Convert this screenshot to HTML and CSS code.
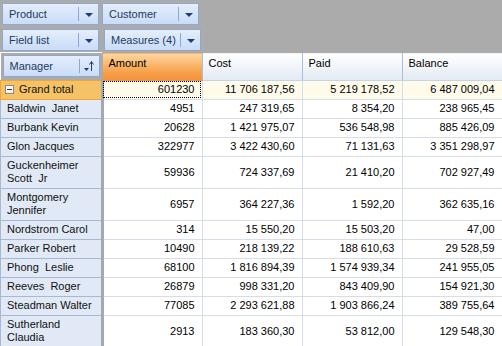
FILE: index.html
```
<!DOCTYPE html>
<html lang="en">
<head>
  <meta charset="UTF-8" />
  <title>Pivot grid</title>
  <link rel="stylesheet" href="styles.css">
</head>
<body>
  <div class="pivot">
    <!-- filter / column / data areas -->
    <div class="toolbar">
      <div class="bar-row">
        <div class="field-btn"><span class="label">Product</span><span class="drop"><i class="tri"></i></span></div>
        <div class="field-btn"><span class="label">Customer</span><span class="drop"><i class="tri"></i></span></div>
      </div>
      <div class="bar-row">
        <div class="field-btn"><span class="label">Field list</span><span class="drop"><i class="tri"></i></span></div>
        <div class="field-btn shifted"><span class="label">Measures (4)</span><span class="drop"><i class="tri"></i></span></div>
      </div>
    </div>

    <table class="grid">
      <thead>
        <tr>
          <th class="corner">
            <div class="field-btn"><span class="label">Manager</span><span class="drop">
              <svg width="12" height="14" viewBox="0 0 12 14">
                <path d="M1 9h5l-2.5 3z" fill="#1e3c78"/>
                <path d="M8.5 12V3" stroke="#1e3c78" stroke-width="1" fill="none"/>
                <path d="M6.5 5.5L8.5 2.5L10.5 5.5" stroke="#1e3c78" stroke-width="1" fill="none"/>
              </svg>
            </span></div>
          </th>
          <th class="col-head active">Amount</th>
          <th class="col-head">Cost</th>
          <th class="col-head">Paid</th>
          <th class="col-head">Balance</th>
        </tr>
      </thead>
      <tbody>
        <tr class="total">
          <th class="row-head"><span class="collapse"></span>Grand total</th>
          <td class="focus">601230</td>
          <td>11 706 187,56</td>
          <td>5 219 178,52</td>
          <td>6 487 009,04</td>
        </tr>
        <tr><th class="row-head">Baldwin&nbsp; Janet</th><td>4951</td><td>247 319,65</td><td>8 354,20</td><td>238 965,45</td></tr>
        <tr><th class="row-head">Burbank Kevin</th><td>20628</td><td>1 421 975,07</td><td>536 548,98</td><td>885 426,09</td></tr>
        <tr><th class="row-head">Glon Jacques</th><td>322977</td><td>3 422 430,60</td><td>71 131,63</td><td>3 351 298,97</td></tr>
        <tr class="tall"><th class="row-head">Guckenheimer<br>Scott&nbsp; Jr</th><td>59936</td><td>724 337,69</td><td>21 410,20</td><td>702 927,49</td></tr>
        <tr class="tall"><th class="row-head">Montgomery<br>Jennifer</th><td>6957</td><td>364 227,36</td><td>1 592,20</td><td>362 635,16</td></tr>
        <tr><th class="row-head">Nordstrom Carol</th><td>314</td><td>15 550,20</td><td>15 503,20</td><td>47,00</td></tr>
        <tr><th class="row-head">Parker Robert</th><td>10490</td><td>218 139,22</td><td>188 610,63</td><td>29 528,59</td></tr>
        <tr><th class="row-head">Phong&nbsp; Leslie</th><td>68100</td><td>1 816 894,39</td><td>1 574 939,34</td><td>241 955,05</td></tr>
        <tr><th class="row-head">Reeves&nbsp; Roger</th><td>26879</td><td>998 331,20</td><td>843 409,90</td><td>154 921,30</td></tr>
        <tr><th class="row-head">Steadman Walter</th><td>77085</td><td>2 293 621,88</td><td>1 903 866,24</td><td>389 755,64</td></tr>
        <tr class="tall"><th class="row-head">Sutherland<br>Claudia</th><td>2913</td><td>183 360,30</td><td>53 812,00</td><td>129 548,30</td></tr>
      </tbody>
    </table>
  </div>
</body>
</html>
```

FILE: styles.css
```
/* page */
body {
  margin: 0;
  padding: 0;
  background-color: #ffffff;
  font-family: 'Liberation Sans', Arial, sans-serif;
  font-size: 11px;
  color: #000;
}

.pivot {
  width: 502px;
  overflow: hidden;
}

/* gray area with field buttons */
.toolbar {
  background-color: #ababab;
  padding: 3px 0 1px 2px;
  display: flex;
  flex-direction: column;
  gap: 4px;
}

.bar-row {
  display: flex;
  gap: 3px;
}

.field-btn {
  box-sizing: border-box;
  width: 97px;
  height: 22px;
  display: flex;
  align-items: center;
  background: linear-gradient(#e4eefc, #c9dcf7);
  border: 1px solid #8ea8cf;
  border-radius: 1px;
  color: #1e3a5f;
  font-size: 11px;
  font-weight: normal;
  text-align: left;
}
.field-btn.shifted {
  margin-left: 2px;
}
.field-btn .label {
  flex: 1;
  padding-left: 6px;
  white-space: nowrap;
  overflow: hidden;
}
.field-btn .drop {
  flex: none;
  width: 19px;
  height: 14px;
  border-left: 1px solid #8ea8cf;
  display: flex;
  align-items: center;
  justify-content: center;
}
.tri {
  width: 0;
  height: 0;
  border-left: 4px solid transparent;
  border-right: 4px solid transparent;
  border-top: 4px solid #1e3c78;
  margin-top: 2px;
}

/* pivot table */
.grid {
  border-collapse: collapse;
  table-layout: fixed;
  width: 502px;
}
.grid th,
.grid td {
  padding: 0;
  font-weight: normal;
  line-height: 13px;
}
.grid tbody tr {
  height: 19px;
}
.grid tbody tr.tall {
  height: 32px;
}

.corner {
  width: 99px;
  height: 27px;
  background-color: #ababab;
  padding: 0 0 0 2px !important;
  border-right: 1px solid #ababab;
  vertical-align: middle;
}

.col-head {
  width: 100px;
  box-sizing: border-box;
  height: 27px;
  text-align: left;
  vertical-align: top;
  padding: 4px 6px 0 !important;
  background: linear-gradient(#ffffff, #e3eaf4);
  border-left: 1px solid #a9bfd9;
  border-bottom: 1px solid #c5d3e4;
  border-top: 1px solid #ababab;
}
.col-head.active {
  background: linear-gradient(#fed8a0, #f7a04a 70%, #f4913a);
  border-left: 1px solid #e7903a;
  border-bottom: 1px solid #f4913a;
}

/* row headers */
.row-head {
  text-align: left;
  padding: 0 3px 0 6px !important;
  background-color: #e0e9f5;
  border-top: 1px solid #a6b9d1;
  border-bottom: 1px solid #a6b9d1;
  border-right: 3px solid #a3a9b0;
  border-left: 1px solid #a6b9d1;
  color: #111;
  white-space: nowrap;
}

.total .row-head {
  background-color: #f5c366;
  border: 1px solid #f2a43c;
  border-right: 3px solid #a3a9b0;
  padding-left: 4px !important;
}
.collapse {
  display: inline-block;
  box-sizing: border-box;
  width: 9px;
  height: 9px;
  border: 1px solid #8a8a8a;
  background-color: #f7f7f7;
  margin-right: 5px;
  vertical-align: -1px;
  position: relative;
}
.collapse::after {
  content: "";
  position: absolute;
  left: 1px;
  top: 3px;
  width: 5px;
  height: 1px;
  background-color: #333;
}

/* data cells */
.grid td {
  text-align: right;
  padding-right: 7px;
  border: 1px solid #d4dde8;
  white-space: nowrap;
}
.total td {
  background-color: #fffbea;
}
.grid td.focus {
  outline: 1px dotted #000;
  outline-offset: -2px;
}
```
